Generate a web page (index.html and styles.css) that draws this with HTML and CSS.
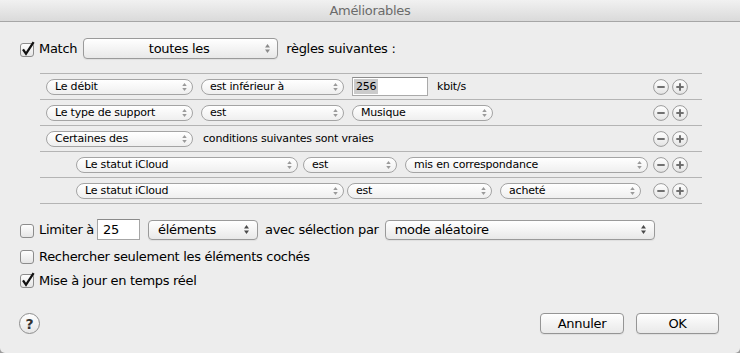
FILE: index.html
```html
<!DOCTYPE html>
<html lang="fr">
<head>
  <meta charset="UTF-8" />
  <title>Améliorables</title>
  <link rel="stylesheet" href="styles.css">
</head>
<body>
  <svg class="defs" aria-hidden="true">
    <defs>
      <linearGradient id="g-btn" x1="0" y1="0" x2="0" y2="1">
        <stop offset="0" stop-color="#ffffff"/>
        <stop offset="1" stop-color="#e4e4e4"/>
      </linearGradient>
      <symbol id="arrows" viewBox="0 0 5 9">
        <polygon points="0,3.5 2.5,0 5,3.5"/>
        <polygon points="0,5.5 2.5,9 5,5.5"/>
      </symbol>
      <symbol id="check-off" viewBox="0 0 15 16">
        <rect x="0.5" y="2.5" width="13" height="13" rx="2.5" fill="url(#g-btn)" stroke="#8c8c8c"/>
      </symbol>
      <symbol id="check-on" viewBox="0 0 15 16">
        <rect x="0.5" y="2.5" width="13" height="13" rx="2.5" fill="url(#g-btn)" stroke="#8c8c8c"/>
        <path d="M3 8.4 L6 12.8 L13.6 1.2" fill="none" stroke="#111" stroke-width="2.3"/>
      </symbol>
      <symbol id="minus" viewBox="0 0 16 16">
        <circle cx="8" cy="8" r="7.4" fill="url(#g-btn)" stroke="#9a9a9a"/>
        <line x1="4.3" y1="8" x2="11.7" y2="8" stroke="#6a6a6a" stroke-width="1.9"/>
      </symbol>
      <symbol id="plus" viewBox="0 0 16 16">
        <circle cx="8" cy="8" r="7.4" fill="url(#g-btn)" stroke="#9a9a9a"/>
        <line x1="4.3" y1="8" x2="11.7" y2="8" stroke="#6a6a6a" stroke-width="1.9"/>
        <line x1="8" y1="4.3" x2="8" y2="11.7" stroke="#6a6a6a" stroke-width="1.9"/>
      </symbol>
    </defs>
  </svg>

  <div class="window">
    <div class="titlebar">Améliorables</div>

    <div class="match-row">
      <svg class="check"><use href="#check-on"/></svg>
      <span class="label">Match</span>
      <div class="popup popup-match">
        <span class="popup-text centered">toutes les</span>
        <svg class="arrows light"><use href="#arrows"/></svg>
      </div>
      <span class="after">règles suivantes :</span>
    </div>

    <div class="rules">
      <div class="rule">
        <div class="mini w-field"><span>Le débit</span><svg class="arrows-sm"><use href="#arrows"/></svg></div>
        <div class="mini w-op"><span>est inférieur à</span><svg class="arrows-sm"><use href="#arrows"/></svg></div>
        <div class="num"><span class="sel">256</span></div>
        <span class="unit">kbit/s</span>
        <div class="pm"><svg><use href="#minus"/></svg><svg><use href="#plus"/></svg></div>
      </div>
      <div class="rule">
        <div class="mini w-field"><span>Le type de support</span><svg class="arrows-sm"><use href="#arrows"/></svg></div>
        <div class="mini w-op"><span>est</span><svg class="arrows-sm"><use href="#arrows"/></svg></div>
        <div class="mini w-value"><span>Musique</span><svg class="arrows-sm"><use href="#arrows"/></svg></div>
        <div class="pm"><svg><use href="#minus"/></svg><svg><use href="#plus"/></svg></div>
      </div>
      <div class="rule">
        <div class="mini w-field"><span>Certaines des</span><svg class="arrows-sm"><use href="#arrows"/></svg></div>
        <span class="cond">conditions suivantes sont vraies</span>
        <div class="pm"><svg><use href="#minus"/></svg><svg><use href="#plus"/></svg></div>
      </div>
      <div class="rule nested">
        <div class="mini w-cloud-a"><span>Le statut iCloud</span><svg class="arrows-sm"><use href="#arrows"/></svg></div>
        <div class="mini w-est-a"><span>est</span><svg class="arrows-sm"><use href="#arrows"/></svg></div>
        <div class="mini w-match-a"><span>mis en correspondance</span><svg class="arrows-sm"><use href="#arrows"/></svg></div>
        <div class="pm"><svg><use href="#minus"/></svg><svg><use href="#plus"/></svg></div>
      </div>
      <div class="rule nested">
        <div class="mini w-cloud-b"><span>Le statut iCloud</span><svg class="arrows-sm"><use href="#arrows"/></svg></div>
        <div class="mini w-est-b"><span>est</span><svg class="arrows-sm"><use href="#arrows"/></svg></div>
        <div class="mini w-value"><span>acheté</span><svg class="arrows-sm"><use href="#arrows"/></svg></div>
        <div class="pm"><svg><use href="#minus"/></svg><svg><use href="#plus"/></svg></div>
      </div>
    </div>

    <div class="option-row limit-row">
      <svg class="check"><use href="#check-off"/></svg>
      <span class="label">Limiter à</span>
      <div class="field">25</div>
      <div class="popup popup-items">
        <span class="popup-text">éléments</span>
        <svg class="arrows"><use href="#arrows"/></svg>
      </div>
      <span class="with">avec sélection par</span>
      <div class="popup popup-mode">
        <span class="popup-text">mode aléatoire</span>
        <svg class="arrows"><use href="#arrows"/></svg>
      </div>
    </div>

    <div class="option-row check-row">
      <svg class="check"><use href="#check-off"/></svg>
      <span class="label">Rechercher seulement les éléments cochés</span>
    </div>

    <div class="option-row check-row last">
      <svg class="check"><use href="#check-on"/></svg>
      <span class="label">Mise à jour en temps réel</span>
    </div>

    <div class="footer">
      <div class="help">?</div>
      <div class="buttons">
        <div class="btn">Annuler</div>
        <div class="btn btn-ok">OK</div>
      </div>
    </div>
  </div>
</body>
</html>
```

FILE: styles.css
```css
body {
  margin: 0;
  background: #9c9c9c;
  font-family: "DejaVu Sans", "Liberation Sans", sans-serif;
  color: #000;
}

.defs {
  display: block;
  width: 0;
  height: 0;
  overflow: hidden;
}

.window {
  width: 740px;
  height: 353px;
  background: #ededed;
  border-radius: 0 0 5px 5px;
  display: flex;
  flex-direction: column;
  overflow: hidden;
  font-size: 13px;
  letter-spacing: -0.3px;
}

.titlebar {
  flex-shrink: 0;
  height: 21px;
  line-height: 21px;
  border-bottom: 1px solid #a6a6a6;
  background: linear-gradient(#f1f1f1, #dadada);
  text-align: center;
  color: #6b6b6b;
}

/* match row */
.match-row {
  display: flex;
  align-items: center;
  height: 21px;
  margin: 16px 0 0 20px;
}

.check {
  width: 15px;
  height: 16px;
  flex-shrink: 0;
}

.label {
  margin-left: 4px;
  white-space: nowrap;
}

.popup {
  height: 21px;
  box-sizing: border-box;
  border: 1px solid #9a9a9a;
  border-radius: 4px;
  background: linear-gradient(#ffffff, #f4f4f4 50%, #e8e8e8);
  box-shadow: 0 1px 1px rgba(0, 0, 0, 0.06);
  display: flex;
  align-items: center;
  padding: 0 8px 0 9px;
  flex-shrink: 0;
}

.popup-text {
  flex: 1;
  white-space: nowrap;
}

.popup-text.centered {
  text-align: center;
}

.arrows {
  width: 5px;
  height: 9px;
  fill: #4a4a4a;
  flex-shrink: 0;
}

.arrows.light {
  fill: #8a8a8a;
}

.popup-match {
  width: 195px;
  margin-left: 6px;
  padding-right: 7px;
}

.after {
  margin-left: 8px;
}

/* rule list */
.rules {
  margin: 14px 38px 0 40px;
  border-top: 1px solid #b4b4b4;
}

.rule {
  height: 25px;
  border-bottom: 1px solid #b4b4b4;
  display: flex;
  align-items: center;
  padding-left: 6px;
  font-size: 11px;
  letter-spacing: -0.2px;
}

.rule.nested {
  padding-left: 36px;
}

.mini {
  height: 16px;
  box-sizing: border-box;
  border: 1px solid #a4a4a4;
  border-radius: 8px;
  background: linear-gradient(#ffffff, #efefef);
  display: flex;
  align-items: center;
  justify-content: space-between;
  padding: 0 5px 0 8px;
  flex-shrink: 0;
  white-space: nowrap;
}

.mini + .mini {
  margin-left: 8px;
}

.arrows-sm {
  width: 5px;
  height: 8px;
  fill: #9a9a9a;
}

.w-field { width: 147px; }
.w-op { width: 143px; }
.w-value { width: 141px; }
.w-cloud-a { width: 222px; }
.w-est-a { width: 94px; }
.mini.w-est-a { margin-left: 5px; }
.w-match-a { width: 243px; }
.w-cloud-b { width: 268px; }
.w-est-b { width: 145px; }
.mini.w-est-b { margin-left: 3px; }

.num {
  width: 76px;
  height: 19px;
  box-sizing: border-box;
  margin-left: 8px;
  border: 1px solid #aaaaaa;
  border-top-color: #8c8c8c;
  background: #fff;
  padding-left: 1px;
  display: flex;
  align-items: center;
}

.sel {
  background: #cbcbcb;
  padding: 1px 2px 1px 2px;
}

.unit {
  margin-left: 9px;
}

.cond {
  margin-left: 10px;
}

.pm {
  margin-left: auto;
  margin-right: 14px;
  display: flex;
  gap: 3px;
}

.pm svg {
  width: 16px;
  height: 16px;
}

/* options */
.option-row {
  display: flex;
  align-items: center;
  margin-left: 20px;
}

.limit-row {
  height: 21px;
  margin-top: 15px;
}

.field {
  width: 43px;
  height: 21px;
  box-sizing: border-box;
  margin-left: 3px;
  border: 1px solid #a6a6a6;
  border-top-color: #8a8a8a;
  background: #fff;
  padding-left: 5px;
  display: flex;
  align-items: center;
}

.popup-items {
  width: 110px;
  height: 20px;
  margin-left: 8px;
}

.with {
  margin-left: 7px;
  white-space: nowrap;
}

.popup-mode {
  width: 270px;
  height: 20px;
  margin-left: 6px;
}

.check-row {
  height: 18px;
  margin-top: 7px;
}

.check-row.last {
  margin-top: 6px;
}

/* footer */
.footer {
  margin-top: auto;
  margin-bottom: 19px;
  height: 21px;
  display: flex;
  align-items: center;
  padding: 0 21px 0 19px;
}

.help {
  width: 21px;
  height: 21px;
  box-sizing: border-box;
  border: 1px solid #8e8e8e;
  border-radius: 50%;
  background: linear-gradient(#ffffff, #e6e6e6);
  display: flex;
  align-items: center;
  justify-content: center;
  font-weight: bold;
  font-size: 14px;
  color: #333;
}

.buttons {
  margin-left: auto;
  display: flex;
  gap: 12px;
}

.btn {
  width: 84px;
  height: 21px;
  box-sizing: border-box;
  border: 1px solid #959595;
  border-radius: 4px;
  background: linear-gradient(#ffffff, #f3f3f3 50%, #e9e9e9);
  box-shadow: 0 1px 1px rgba(0, 0, 0, 0.06);
  display: flex;
  align-items: center;
  justify-content: center;
}

.btn-ok {
  width: 83px;
}
```
